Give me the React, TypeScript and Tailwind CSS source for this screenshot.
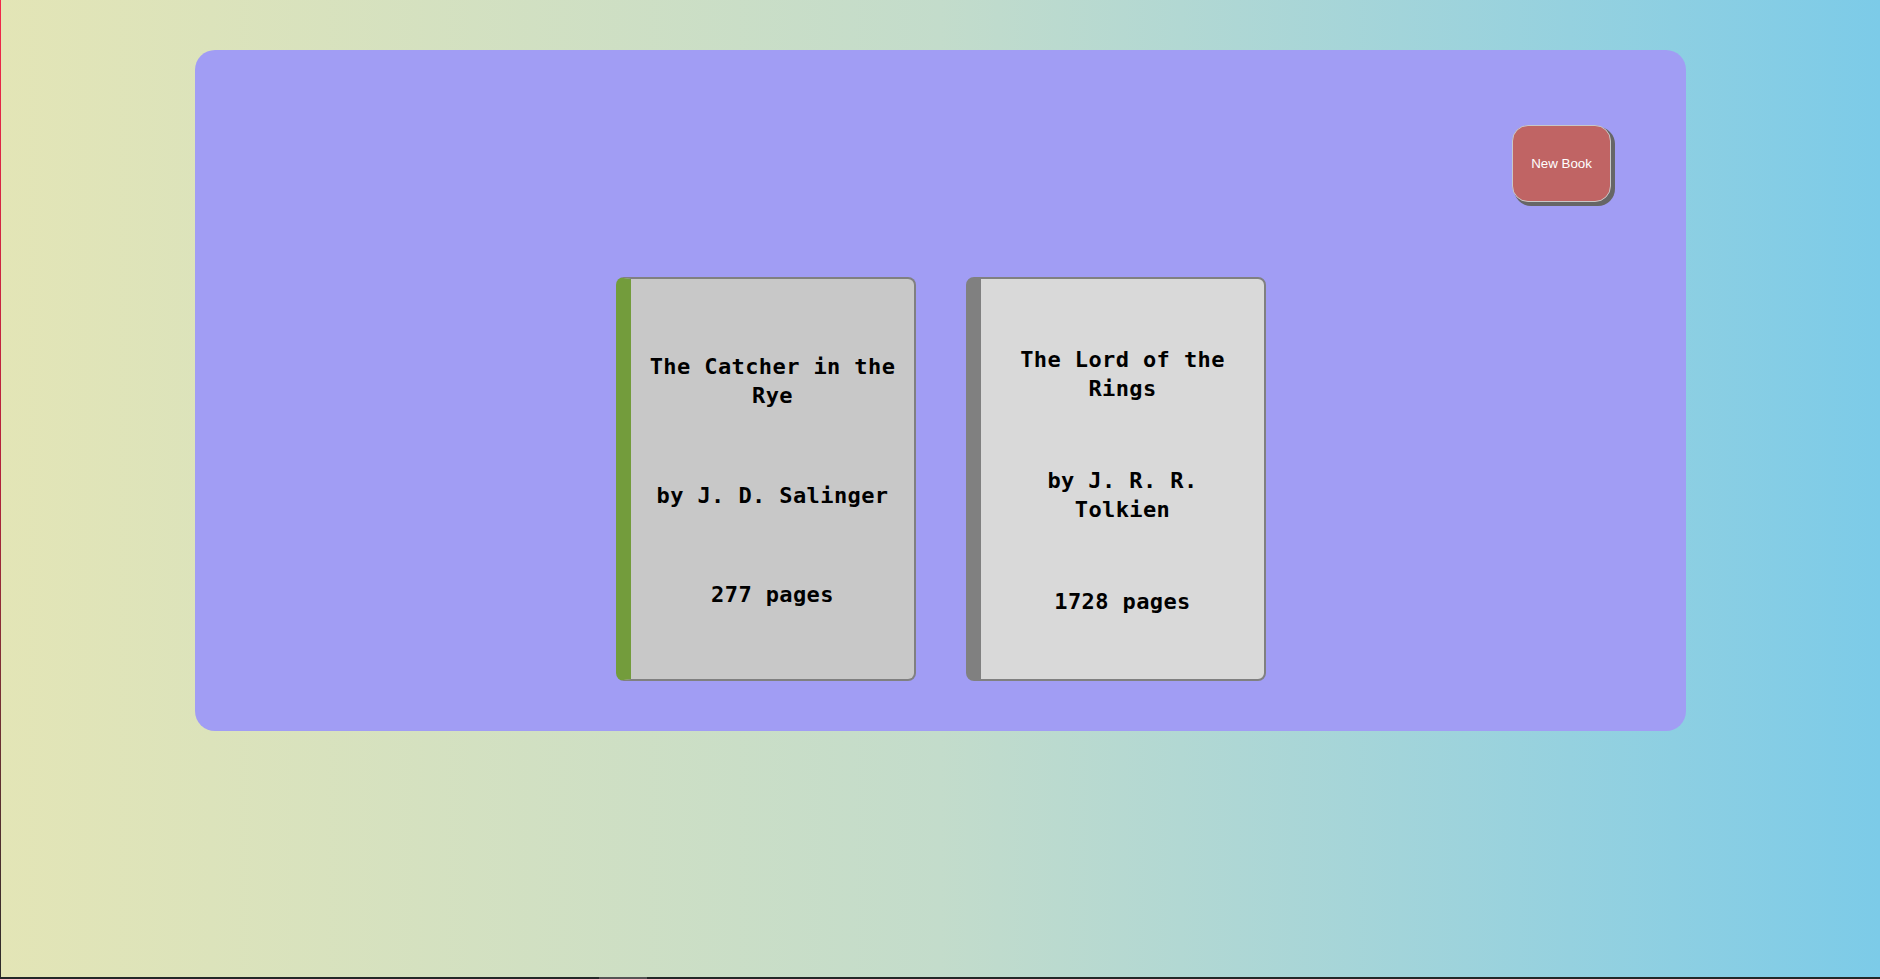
import React from 'react';

type Book = {
    title: string;
    author: string;
    pages: number;
    spine: string;
    cover: string;
};

const books: Book[] = [
    {
        title: 'The Catcher in the Rye',
        author: 'by J. D. Salinger',
        pages: 277,
        spine: 'border-l-[#739c3c]',
        cover: 'bg-[#c8c8c8]'
    },
    {
        title: 'The Lord of the Rings',
        author: 'by J. R. R. Tolkien',
        pages: 1728,
        spine: 'border-l-[#808080]',
        cover: 'bg-[#d9d9d9]'
    }
];

const BookCard = ({ book }: { book: Book }) => {
    return (
        <div
            className={`flex h-[404px] w-[300px] flex-col justify-evenly rounded-lg border-2 border-l-[15px] border-[#808080] px-4 pt-[3px] text-center font-bold text-black ${book.spine} ${book.cover}`}
            style={{ fontFamily: '"DejaVu Sans Mono", "Liberation Mono", monospace' }}
        >
            <div className="text-[22px] leading-[29px] tracking-[0.4px]">{book.title}</div>
            <div className="text-[22px] leading-[29px] tracking-[0.4px]">{book.author}</div>
            <div className="text-[22px] leading-[29px] tracking-[0.4px]">{book.pages} pages</div>
        </div>
    );
};

const App = () => {
    return (
        <div className="flex h-[979px] w-[1880px] flex-col overflow-hidden">
            <div className="flex flex-1">
                <div className="w-px bg-gradient-to-b from-[#f2284a] via-[#b0203a] to-[#2a2a2a]" />
                <div className="flex-1 bg-gradient-to-r from-[#e3e5b6] via-[#c3dccb] to-[#7ccbe8]">
                    <div className="mx-auto mt-[50px] flex h-[681px] w-[1491px] flex-col rounded-[20px] bg-[#a19df4] px-[75px] pt-[75px]">
                        <div className="flex justify-end">
                            <button
                                className="h-[77px] w-[99px] rounded-2xl border border-[#c8c8c8] bg-[#c06464] text-[13.33px] text-white shadow-[3px_3px_0_1px_#666]"
                                style={{ fontFamily: '"Liberation Sans", Arial, sans-serif' }}
                            >
                                New Book
                            </button>
                        </div>
                        <div className="mt-[75px] flex justify-center gap-[50px] pl-px">
                            {books.map((b, idx) => (
                                <BookCard key={idx} book={b} />
                            ))}
                        </div>
                    </div>
                </div>
            </div>
            <div className="flex h-[2px] bg-[#232828]">
                <div className="ml-[599px] w-[48px] bg-[#555]" />
            </div>
        </div>
    );
};

export default App;
